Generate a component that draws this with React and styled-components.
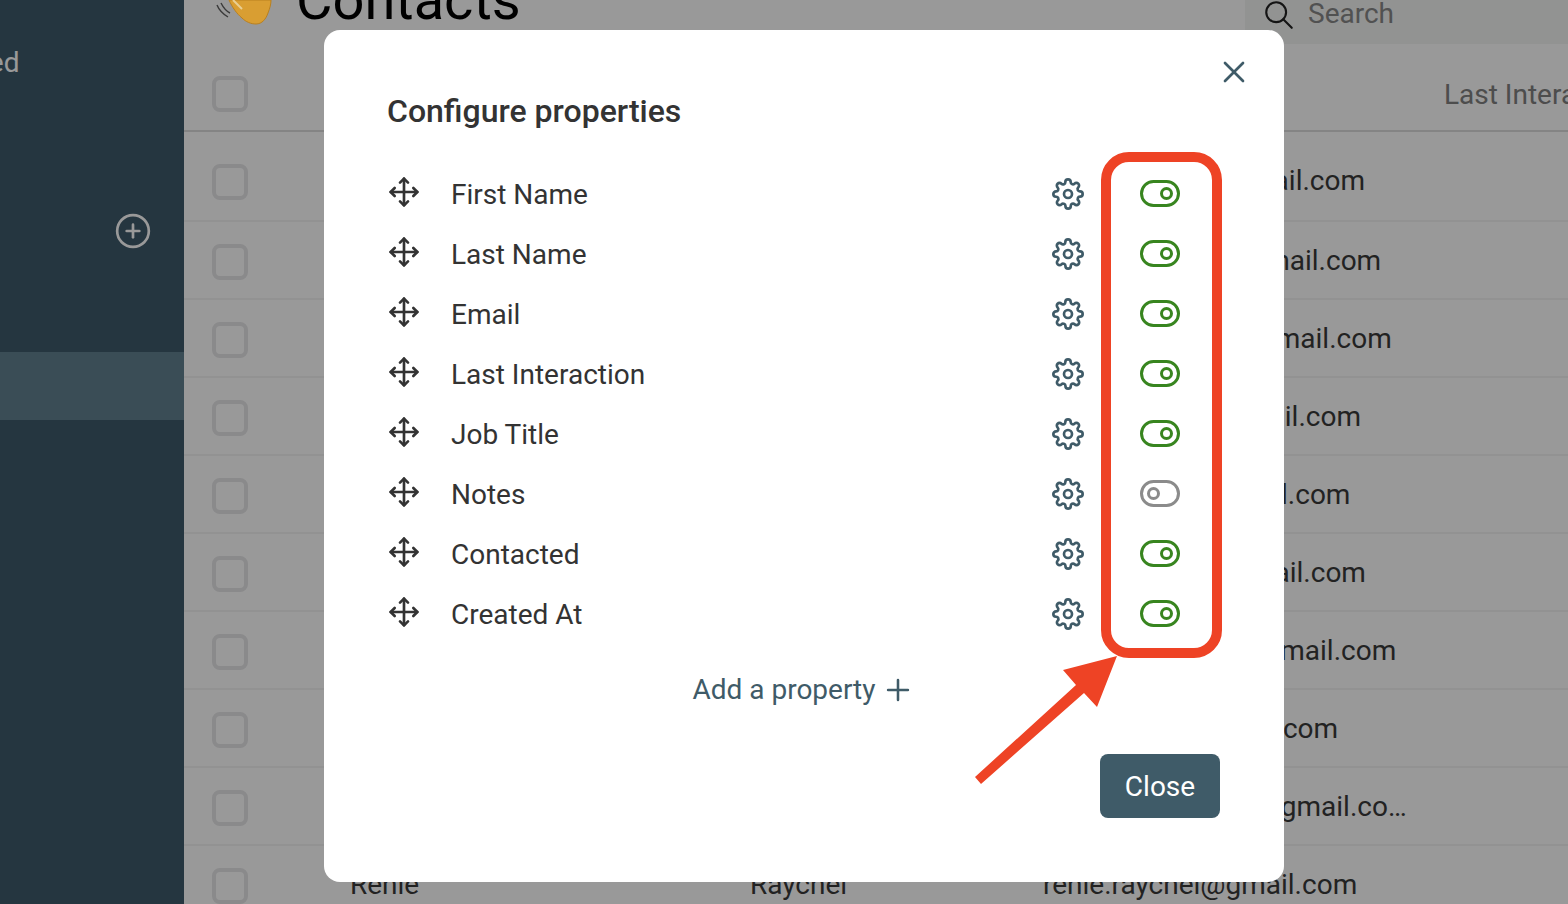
import React from 'react';
import styled, { createGlobalStyle } from 'styled-components';
import { CirclePlus, Move } from 'lucide-react';
import { FiSettings } from 'react-icons/fi';
import { TbPlus, TbSearch, TbX } from 'react-icons/tb';

const GlobalStyle = createGlobalStyle`
  html, body {
    margin: 0;
    height: 100%;
    overflow: hidden;
    background: #fff;
    font-family: Roboto, "Liberation Sans", sans-serif;
  }
`;

const Page = styled.div`
  display: flex;
  width: 1568px;
  height: 904px;
  overflow: hidden;
`;

const Sidebar = styled.aside`
  flex: 0 0 184px;
  display: flex;
  flex-direction: column;
  background: #3e5a6b;
  color: #fff;
  overflow: hidden;
`;

const SideLabel = styled.div`
  margin: 46px 0 0 -109px;
  font-size: 28px;
  line-height: 34px;
  white-space: nowrap;
`;

const SideAdd = styled.div`
  display: flex;
  justify-content: flex-end;
  margin-top: 132px;
  padding-right: 32px;
  line-height: 0;
`;

const SideActive = styled.div`
  height: 68px;
  margin-top: 102px;
  background: #628090;
`;

const Main = styled.main`
  flex: 1;
  min-width: 0;
  overflow: hidden;
  background: #fff;
`;

const TopBar = styled.header`
  display: flex;
  align-items: flex-end;
  height: 44px;
`;

const Title = styled.div`
  display: flex;
  align-items: flex-end;
  gap: 23px;
  flex: 1;
  height: 44px;
  padding-left: 31px;
  color: #000;
`;

const TitleText = styled.h1`
  margin: 0 0 14px;
  font-size: 56px;
  font-weight: 400;
  line-height: 60px;
`;

// the emoji keeps its full colour in the reference, so it sits above the dimmer
const WaveHand = styled.svg`
  position: relative;
  z-index: 1;
  width: 58px;
  height: 26px;
  margin-bottom: 18px;
`;

const SearchBox = styled.div`
  display: flex;
  align-items: center;
  gap: 12px;
  width: 323px;
  height: 44px;
  padding-left: 17px;
  box-sizing: border-box;
  background: #f4f5f4;
  color: #222;
  svg {
    margin-top: -14px;
  }
`;

const SearchText = styled.span`
  margin-top: -18px;
  font-size: 28px;
  color: #888;
`;

const TableGrid = styled.div`
  display: grid;
  grid-template-columns: 138px 400px 293px 401px 1fr;
  align-items: center;
  padding-left: 28px;
`;

const HeadRow = styled(TableGrid)`
  height: 88px;
  padding-top: 14px;
  box-sizing: border-box;
  border-bottom: 2px solid #dcdcdc;
  font-size: 28px;
  color: #808080;
  white-space: nowrap;
`;

const Rows = styled.div`
  padding-top: 12px;
`;

const Row = styled(TableGrid)`
  height: 78px;
  box-sizing: border-box;
  border-bottom: 2px solid #f3f3f3;
  font-size: 28px;
  color: #3a3a3a;
  &:first-child {
    padding-bottom: 4px;
  }
`;

const Box = styled.span`
  display: block;
  width: 36px;
  height: 36px;
  box-sizing: border-box;
  border: 4px solid #e6e6e8;
  border-radius: 8px;
  margin-top: ${(p) => (p.$head ? '0' : '4px')};
`;

const Email = styled.span`
  overflow: hidden;
  padding-right: 36px;
  text-overflow: ellipsis;
  white-space: nowrap;
`;

const Overlay = styled.div`
  position: fixed;
  inset: 0;
  padding: 30px 0 0 324px;
  background: rgba(0, 0, 0, 0.4);
`;

const Modal = styled.section`
  position: relative;
  display: flex;
  flex-direction: column;
  width: 960px;
  height: 852px;
  padding: 62px 64px 64px 63px;
  box-sizing: border-box;
  background: #fff;
  border-radius: 16px;
  color: #333;
`;

const CloseIcon = styled.button`
  position: absolute;
  top: 24px;
  right: 32px;
  display: flex;
  padding: 0;
  border: 0;
  background: none;
  color: #3f5b68;
  font-size: 36px;
`;

const Heading = styled.h2`
  margin: 0 0 34px;
  font-size: 32px;
  font-weight: 500;
  line-height: 38px;
  color: #333;
`;

const PropList = styled.ul`
  display: flex;
  flex-direction: column;
  margin: 0;
  padding: 0;
  list-style: none;
`;

const PropRow = styled.li`
  display: flex;
  align-items: center;
  height: 60px;
  font-size: 28px;
`;

const Grip = styled.span`
  display: flex;
  flex: 0 0 63px;
  margin: -4px 0 0 1px;
  color: #333;
`;

const PropName = styled.span`
  flex: 1;
`;

const Gear = styled.span`
  display: flex;
  color: #3f5b68;
  font-size: 32px;
  margin-right: 56px;
`;

const Toggle = styled.svg`
  flex: 0 0 40px;
  width: 40px;
  height: 27px;
  margin: -1px 40px 0 0;
  color: ${(p) => (p.$on ? '#38851f' : '#8b8b8b')};
`;

const AddProperty = styled.button`
  display: flex;
  align-items: center;
  align-self: center;
  gap: 5px;
  margin-top: 24px;
  padding: 0;
  border: 0;
  background: none;
  color: #3f5b68;
  font: 400 28px/44px Roboto, sans-serif;
  svg {
    font-size: 34px;
  }
`;

const Footer = styled.div`
  display: flex;
  justify-content: flex-end;
  margin-top: auto;
`;

const CloseButton = styled.button`
  width: 120px;
  height: 64px;
  border: 0;
  border-radius: 8px;
  background: #3f5b68;
  color: #fff;
  font: 400 28px Roboto, sans-serif;
`;

const Highlight = styled.div`
  position: absolute;
  left: 777px;
  top: 122px;
  width: 121px;
  height: 506px;
  box-sizing: border-box;
  border: 10px solid #ee4325;
  border-radius: 28px;
  pointer-events: none;
`;

const Arrow = styled.svg`
  position: absolute;
  left: 650px;
  top: 620px;
  width: 150px;
  height: 140px;
  pointer-events: none;
`;

const contacts = [
  ['Mark', 'Fletcher', 'mark.fletcher@gmail.com'],
  ['Marc', 'Holloway', 'marc.holloway@gmail.com'],
  ['Tomas', 'Whitfield', 'tomas.whitfield@gmail.com'],
  ['Kurt', 'Lindqvist', 'kurt.lindqvist@gmail.com'],
  ['Carla', 'Jensen', 'carla.jensen@gmail.com'],
  ['Hector', 'Ortega', 'hector.ortega@gmail.com'],
  ['Grace', 'Montrose', 'grace.montrose@gmail.com'],
  ['Laura', 'Baker', 'laura.baker@gmail.com'],
  ['David', 'Wadsworth', 'david.wadsworth@gmail.com'],
  ['Renie', 'Raychel', 'renie.raychel@gmail.com'],
];

const properties = [
  { name: 'First Name', on: true },
  { name: 'Last Name', on: true },
  { name: 'Email', on: true },
  { name: 'Last Interaction', on: true },
  { name: 'Job Title', on: true },
  { name: 'Notes', on: false },
  { name: 'Contacted', on: true },
  { name: 'Created At', on: true },
];

const ToggleIcon = ({ on }) => (
  <Toggle $on={on} viewBox='0 0 40 27' fill='none' stroke='currentColor' strokeWidth='3'>
    <rect x='1.5' y='1.5' width='37' height='24' rx='12' />
    <circle cx={on ? 26.5 : 13.5} cy='13.5' r='5' />
  </Toggle>
);

const App = () => {
  return (
    <>
      <GlobalStyle />
      <Page>
        <Sidebar>
          <SideLabel>Contacted</SideLabel>
          <SideAdd>
            <CirclePlus size={38} strokeWidth={1.7} />
          </SideAdd>
          <SideActive />
        </Sidebar>
        <Main>
          <TopBar>
            <Title>
              <WaveHand viewBox='0 0 58 26'>
                <path
                  d='M14 0 C17 7 22 14 27 18 C31 22 36 24 41 24 C47 24 51 19 53 13 C55 8 56 4 56 0 Z'
                  fill='#d99e32'
                  stroke='#b9801f'
                  strokeWidth='1'
                />
                <path d='M18 0 L27 9' fill='none' stroke='#e9cf94' strokeWidth='2' />
                <path
                  d='M2 5 C4 10 8 14 13 17 M6 3 C8 7 11 11 15 13'
                  fill='none'
                  stroke='#3a3a3a'
                  strokeWidth='1.4'
                />
              </WaveHand>
              <TitleText>Contacts</TitleText>
            </Title>
            <SearchBox>
              <TbSearch strokeWidth={1.5} size={34} />
              <SearchText>Search</SearchText>
            </SearchBox>
          </TopBar>
          <HeadRow>
            <Box $head />
            <span>First Name</span>
            <span>Last Name</span>
            <span>Email</span>
            <span>Last Interaction</span>
          </HeadRow>
          <Rows>
            {contacts.map(([first, last, email]) => (
              <Row key={email}>
                <Box />
                <span>{first}</span>
                <span>{last}</span>
                <Email>{email}</Email>
              </Row>
            ))}
          </Rows>
        </Main>
      </Page>
      <Overlay>
        <Modal>
          <CloseIcon aria-label='Close dialog'>
            <TbX strokeWidth={1.8} />
          </CloseIcon>
          <Heading>Configure properties</Heading>
          <PropList>
            {properties.map((prop) => (
              <PropRow key={prop.name}>
                <Grip>
                  <Move size={32} strokeWidth={2} />
                </Grip>
                <PropName>{prop.name}</PropName>
                <Gear>
                  <FiSettings strokeWidth={2} />
                </Gear>
                <ToggleIcon on={prop.on} />
              </PropRow>
            ))}
          </PropList>
          <AddProperty>
            Add a property
            <TbPlus strokeWidth={1.8} />
          </AddProperty>
          <Footer>
            <CloseButton>Close</CloseButton>
          </Footer>
          <Highlight />
          <Arrow viewBox='0 0 150 140'>
            <path d='M1 127 L102 35 L89 20 L143 6 L123 57 L110 43 L7 134 Z' fill='#ee4325' />
          </Arrow>
        </Modal>
      </Overlay>
    </>
  );
};

export default App;
